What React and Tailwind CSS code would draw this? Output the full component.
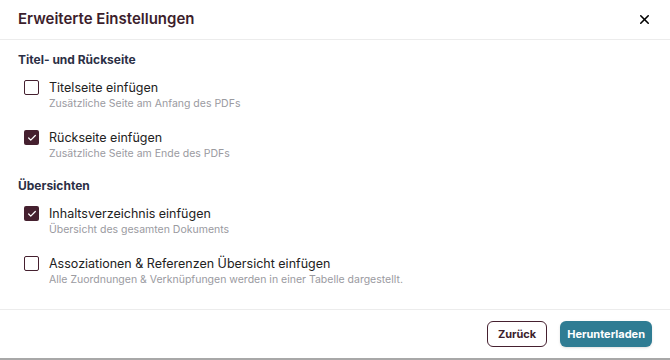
import { X, Check } from 'lucide-react'

const SECTIONS = [
    {
        title: 'Titel- und Rückseite',
        items: [
            { label: 'Titelseite einfügen', hint: 'Zusätzliche Seite am Anfang des PDFs', checked: false },
            { label: 'Rückseite einfügen', hint: 'Zusätzliche Seite am Ende des PDFs', checked: true },
        ],
    },
    {
        title: 'Übersichten',
        items: [
            { label: 'Inhaltsverzeichnis einfügen', hint: 'Übersicht des gesamten Dokuments', checked: true },
            {
                label: 'Assoziationen & Referenzen Übersicht einfügen',
                hint: 'Alle Zuordnungen & Verknüpfungen werden in einer Tabelle dargestellt.',
                checked: false,
            },
        ],
    },
]

function Option({ label, hint, checked }) {
    return (
        <label className="flex items-start gap-[10px] pl-6">
            {checked ? (
                <span className="mt-[1px] flex h-[15px] w-[15px] shrink-0 items-center justify-center rounded-[2px] bg-[#45202f]">
                    <Check className="h-[10px] w-[10px] text-white" strokeWidth={3} />
                </span>
            ) : (
                <span className="mt-[1px] h-[15px] w-[15px] shrink-0 rounded-[2px] border-[1.5px] border-[#45202f] bg-white" />
            )}
            <div>
                <div className="text-[12.5px] leading-[17px] text-[#222]">{label}</div>
                <div className="text-[10.5px] leading-[16px] text-[#9a9a9f]">{hint}</div>
            </div>
        </label>
    )
}

export default function App() {
    return (
        <div className="flex h-[360px] w-[670px] flex-col bg-white font-['Inter',sans-serif] border-b-2 border-[#a8a8a8]">
            <div className="flex h-[40px] items-center justify-between border-b border-[#ececec] pl-[18px] pr-[18px]">
                <h1 className="text-[15px] font-semibold text-[#3c1e2c]">Erweiterte Einstellungen</h1>
                <X className="h-[15px] w-[15px] text-black" strokeWidth={2.5} />
            </div>

            <div className="flex-1 pt-[11px]">
                {SECTIONS.map((section, i) => (
                    <div key={section.title} className={i > 0 ? 'mt-[15px]' : ''}>
                        <h2 className="pl-[18px] text-[12px] font-bold leading-[18px] text-[#2b2f45]">{section.title}</h2>
                        <div className="mt-[10px] flex flex-col gap-[17px]">
                            {section.items.map(item => (
                                <Option key={item.label} {...item} />
                            ))}
                        </div>
                    </div>
                ))}
            </div>

            <div className="flex h-[49px] items-center justify-end gap-[13px] border-t border-[#ececec] pr-[18px]">
                <button className="h-[26px] rounded-[6px] border-[1.5px] border-[#45202f] px-[10px] text-[11px] font-bold text-[#3c1e2c]">
                    Zurück
                </button>
                <button className="h-[26px] rounded-[6px] bg-[#2f7c93] px-[7px] text-[11px] font-bold text-white shadow-sm">
                    Herunterladen
                </button>
            </div>
        </div>
    )
}
